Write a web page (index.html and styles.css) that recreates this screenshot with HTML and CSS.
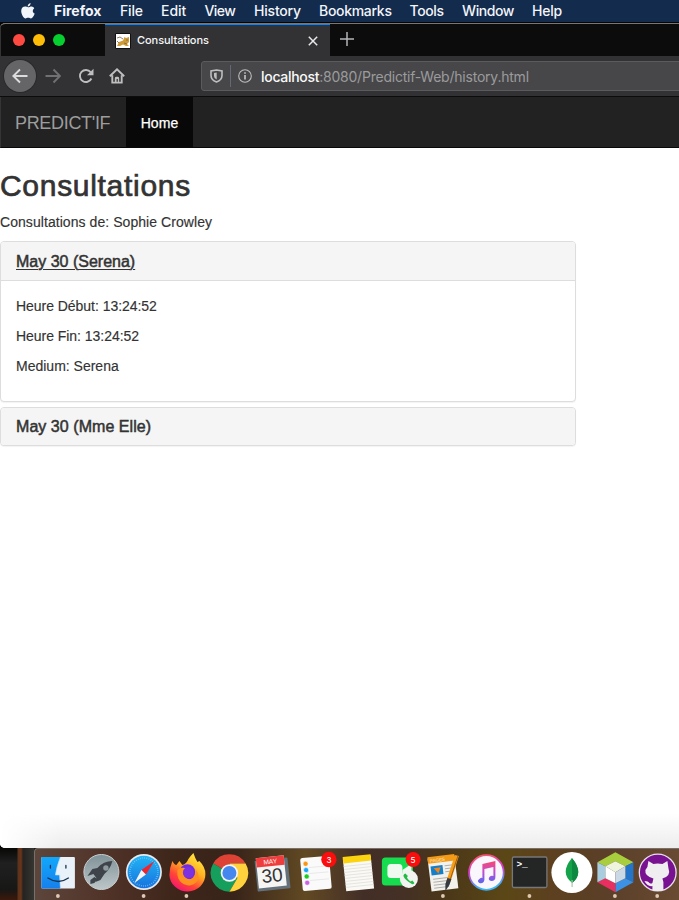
FILE: index.html
```html
<!DOCTYPE html>
<html lang="fr">
<head>
<meta charset="utf-8">
<title>Consultations</title>
<link rel="stylesheet" href="styles.css">
</head>
<body>
<div class="desktop">
  <nav class="menubar">
    <svg class="apple" viewBox="0 0 14 16"><path d="M9.600 0C9.700 1.700 8.300 3.500 6.700 3.500 6.600 1.800 8 .2 9.600 0ZM13.200 5.400C11.200 6.700 11.400 9.500 13.700 10.500 13 12.800 11.400 15.400 9.900 15.400 8.900 15.400 8.500 14.800 7.200 14.800 5.900 14.800 5.400 15.400 4.500 15.400 2.700 15.400.2 11.400.2 8 .2 5 2.100 3.600 4.100 3.600 5.400 3.600 6.200 4.300 7.200 4.300 8.100 4.300 9.100 3.500 10.600 3.500 11.700 3.500 12.700 4.200 13.200 5.400Z"/></svg>
    <span class="app">Firefox</span><span class="m-file">File</span><span class="m-edit">Edit</span><span class="m-view">View</span><span class="m-history">History</span><span class="m-bookmarks">Bookmarks</span><span class="m-tools">Tools</span><span class="m-window">Window</span><span>Help</span>
  </nav>

  <div class="window">
    <div class="tabstrip">
      <div class="lights"><i class="red"></i><i class="yellow"></i><i class="green"></i></div>
      <div class="tab">
        <svg class="favicon" viewBox="0 0 16 16"><path d="M.5.5h15v15H.5Z" fill="#fff" stroke="#111"/><path d="M2 13 4 9 8 7.500 9.500 4 11 5l3-1v5l-2 2 2 2h-3L8 11.500l-3 1.500Z" fill="#d09a36"/><path d="m2 5 3-1 3 2M2 8l2 2M11 7h2M9 10l3 1" stroke="#75664a" fill="none" stroke-width=".8"/></svg>
        <span class="tab-title">Consultations</span>
        <svg class="close" viewBox="0 0 10 10"><path d="m.8.8 8.400 8.400M9.200.8.8 9.200"/></svg>
      </div>
      <svg class="plus" viewBox="0 0 14 14"><path d="M7 0v14M0 7h14"/></svg>
    </div>
    <div class="toolbar">
      <div class="back"><svg viewBox="0 0 16 16"><path d="M15.500 8H1.500M8 1.500 1.300 8 8 14.500"/></svg></div>
      <svg class="forward" viewBox="0 0 16 16"><path d="M.5 8h14M8.500 1.500 15 8l-6.500 6.500"/></svg>
      <svg class="reload" viewBox="0 0 16 16"><path d="M13.400 10.500A6 6 0 1 1 12.600 4.200"/><path d="M15.500.7v6.500H9Z" class="fill"/></svg>
      <svg class="home" viewBox="0 0 16 16"><path d="M.8 8.300 8 1.300l7.200 7M3.300 7.300v7.300h9.400V7.300"/><path d="M5.800 15v-4.500Q5.800 8.800 7 8.800h2q1.200 0 1.200 1.700V15H8.800v-4H7.600v4Z" class="fill"/></svg>
      <div class="urlbar">
        <svg class="shield" viewBox="0 0 13 14"><path d="M6.500 1 12 2v4.500Q12 11 6.500 13 1 11 1 6.500V2Z"/><path d="M6.700 3.500 4 4v3q0 2.500 2.700 3.500Z" class="fill"/></svg>
        <i class="divider"></i>
        <svg class="info" viewBox="0 0 14 14"><circle cx="7" cy="7" r="6.300"/><path d="M7 6v4.500M7 3.200v1.500" stroke-width="1.700"/></svg>
        <span class="url"><b>localhost</b>:8080/Predictif-Web/history.html</span>
      </div>
    </div>

    <header class="navbar"><a class="brand">PREDICT'IF</a><a class="nav-home">Home</a></header>

    <main class="page">
      <h1>Consultations</h1>
      <p class="subtitle">Consultations de: Sophie Crowley</p>
      <section class="panel">
        <h4 class="open"><a>May 30 (Serena)</a></h4>
        <div class="panel-body">
          <p class="time">Heure Début: 13:24:52</p>
          <p class="time">Heure Fin: 13:24:52</p>
          <p>Medium: Serena</p>
        </div>
      </section>
      <section class="panel"><h4><a class="elle">May 30 (Mme Elle)</a></h4></section>
    </main>
  </div>

  <footer class="bottom">
    <div class="wallpaper"></div>
    <div class="dock">
      <svg viewBox="-21.400 -25 42.750 52">
        <defs><linearGradient id="fb" x2="0" y2="1"><stop stop-color="#12a8fb"/><stop offset="1" stop-color="#1680ed"/></linearGradient></defs>
        <rect x="-17" y="-16" width="33.500" height="31.500" rx="1" fill="#e9f1f9"/><path d="M-17-16H2Q-2-6-3 2H1L2 15.500H-17Z" fill="url(#fb)"/><path d="M2-16Q-2-6-3 2H1.300L2 15.500" fill="none" stroke="#bcdcf2" stroke-width=".6"/><path d="M-8-7.500v2.500M7.500-7.500v2.500M-10.500 5Q0 12 10 5" fill="none" stroke="#15334d" stroke-width="1.300" stroke-linecap="round"/><circle class="dot" cx="-.5" cy="23" r="1.900"/></svg>
      <svg viewBox="-21.400 -25 42.750 52">
        <defs><linearGradient id="rg" x2="0" y2="1"><stop stop-color="#7f9297"/><stop offset="1" stop-color="#bdc6c9"/></linearGradient></defs>
        <circle cy="-1" r="17.500" fill="url(#rg)" stroke="#c8cdce"/><path d="M11-12Q2-12-4-5L-9-4-14 3-8 1-5 5-6 9-1 7 3 1Q9-4 11-12Z" fill="#3e4449"/><path d="M-7 4-11 7-11 11-7 10-4 6Z" fill="#3e4449"/><circle cx="4.500" cy="-5" r="2.700" fill="#8c999e"/></svg>
      <svg viewBox="-21.400 -25 42.750 52">
        <defs><linearGradient id="sb" x2="0" y2="1"><stop stop-color="#22b5f5"/><stop offset="1" stop-color="#1772de"/></linearGradient></defs>
        <circle cx="-.5" cy="-1" r="18" fill="#e6eaee"/><circle cx="-.5" cy="-1" r="16.300" fill="url(#sb)"/><circle cx="-.5" cy="-1" r="14" fill="none" stroke="#8bcdf5" stroke-width="1.500" stroke-dasharray=".6 1.600"/><path d="M10-12-3-3 1.500 1.500Z" fill="#f0252c"/><path d="M-10 10-3-3 1.500 1.500Z" fill="#f4f4f5"/><circle class="dot" cx="-.8" cy="23" r="1.900"/></svg>
      <svg viewBox="-21.400 -25 42.750 52">
        <defs><linearGradient id="ff" x1=".8" x2=".2" y2="1"><stop stop-color="#fff044"/><stop offset=".4" stop-color="#ffae20"/><stop offset=".7" stop-color="#ff4537"/><stop offset="1" stop-color="#f20c79"/></linearGradient></defs>
        <path d="M-15-12Q-13-8-11-8L-8-12-5-8Q-1-9 1-14 3-17 6-20 8-14 10-11L12-12Q18-6 18 1A18 17 0 0 1-18 2Q-18-5-15-12Z" fill="url(#ff)"/><circle cy="-1" r="7.800" fill="#712be8"/><path d="M-10-3Q-5-7-1-4L3-3Q0 1-4 0-3 7 4 6 9 4 8-4 13 2 10 8 4 15-4 11-11 7-10-3Z" fill="#ff9120"/><circle cx="1" cy="-.5" r="5.500" fill="#7d32df"/><circle class="dot" cx="-1" cy="23" r="1.900"/></svg>
      <svg viewBox="-21.400 -25 42.750 52">
        <path d="M0 0-16.200-9.400A18.700 18.700 0 0 1 16.200-9.400H0Z" fill="#dd4235"/><path d="M0 0-16.200-9.400A18.700 18.700 0 0 0 0 18.700L8 5Z" fill="#169f5c"/><path d="M0-9.400H16.200A18.700 18.700 0 0 1 0 18.700L8 5Z" fill="#ffd13d"/><circle r="8.700" fill="#f3f3f3"/><circle r="7" fill="#4387ef"/></svg>
      <svg viewBox="-21.400 -25 42.750 52">
        <g transform="rotate(-6)"><rect x="-16.500" y="-14" width="33" height="31" rx="1" fill="#65717a"/><path d="M-15-16.500H13V14H-15Z" fill="#f5f5f4"/><path d="M-15-16.500H13V-7H-15Z" fill="#ef3c3d"/><text x="-1" y="-9.300" class="cal-month">MAY</text><text x="-.5" y="9" class="cal-day">30</text></g></svg>
      <svg viewBox="-21.400 -25 42.750 52">
        <g transform="rotate(-5)"><rect x="-14" y="-16" width="29" height="33" rx="2" fill="#fafafa"/><path d="M-6-6H13M-6 0H13M-6 7H13" stroke="#ddd" stroke-width=".6"/><g stroke="#fff" stroke-width=".5"><circle cx="-9" cy="-10" r="2.500" fill="#fb9414"/><circle cx="-9" cy="-3.700" r="2.500" fill="#17a6f8"/><circle cx="-9" cy="2.700" r="2.500" fill="#1dcc23"/><circle cx="-9" cy="9" r="2.500" fill="#cd61e1"/></g></g><circle cx="13.500" cy="-13.500" r="7.700" fill="#f90d0d"/><text x="13.500" y="-10.500" class="count">3</text></svg>
      <svg viewBox="-21.400 -25 42.750 52">
        <g transform="rotate(-6)"><path d="M-14-16H14V17H-14Z" fill="#faf9f5"/><path d="M-14-17.500H14V-11H-14Z" fill="#fbd30e"/><path d="M-14-8H14M-14-5H14M-14-2H14M-14 1H14M-14 4H14M-14 7H14M-14 10H14M-14 13H14" stroke="#d8d7d1" stroke-width=".6"/></g></svg>
      <svg viewBox="-21.400 -25 42.750 52">
        <rect x="-18.500" y="-15.500" width="31" height="28" rx="3.500" fill="#17dc4f"/><rect x="-13" y="-9" width="15" height="14" rx="3.500" fill="#eef9f0"/><path d="m2-3 9-6v14L2 0Z" fill="#eef9f0"/><circle cx="8.500" cy="6" r="9" fill="#f3f4f1"/><path d="M4 1Q1 3 7 8t7 2l-2-2.500-2 1Q7 6 6.500 4.500L7.500 3 5 .5Z" fill="#22bc43"/><circle cx="12.700" cy="-13.500" r="7.500" fill="#f90d0d"/><text x="12.700" y="-10.500" class="count">5</text></svg>
      <svg viewBox="-21.400 -25 42.750 52">
        <g transform="rotate(-7)"><path d="M-14-16H13V17H-14Z" fill="#f3f1ec"/><path d="M-14-17.500H13V-11H-14Z" fill="#f39a18"/><text x="-12" y="-12" class="pages">PAGES</text><path d="M-12-8H0V1H-12Z" fill="#167fc9"/><path d="m-9-6h7l-3 6Z" fill="#f18418"/><path d="M2-7h8M2-4h7M2-1h6M-11 5H5M-11 8H4M-11 11H4M-11 14H4" stroke="#aaa" stroke-width=".9"/></g><path d="M11.500-18 15.500-17 7 9 3 13V8Z" fill="#f69b12"/><path d="m4 5 4 1-2 6-4 6V11Z" fill="#343a40"/><path d="m14.500-17-7.500 23" stroke="#935522" stroke-width=".9"/><circle class="dot" cx="-.5" cy="23" r="1.900"/></svg>
      <svg viewBox="-21.400 -25 42.750 52">
        <defs><linearGradient id="mu" x2=".2" y2="1"><stop stop-color="#ff5962"/><stop offset=".5" stop-color="#d53ad3"/><stop offset="1" stop-color="#3bb6fa"/></linearGradient><linearGradient id="mn" x2="0" y2="1"><stop stop-color="#f8486e"/><stop offset=".5" stop-color="#c04cd4"/><stop offset="1" stop-color="#5669ed"/></linearGradient></defs>
        <circle cy="-.5" r="17.300" fill="#f9f7fb" stroke="url(#mu)" stroke-width="1.800"/><path d="M-4-9 9-12V4Q9 8 5 8 1 7 3 4 5 2 7 3V-6L-2-4V7Q-3 11-7 10-10 8-7 6-5 4-4 5Z" fill="url(#mn)"/></svg>
      <svg viewBox="-21.400 -25 42.750 52">
        <rect x="-17" y="-16" width="34.500" height="30.500" rx="1.500" fill="#242626" stroke="#777" stroke-width="1.300"/><text x="-13" y="-6.500" class="prompt">&gt;_</text><circle class="dot" cy="23" r="1.900"/></svg>
      <svg viewBox="-21.400 -25 42.750 52">
        <circle cx=".5" cy="-.5" r="20.500" fill="#fff"/><path d="M.5-15Q13 0 .8 10Q-12 0 .5-15Z" fill="#14a24b"/><path d="M.5-15Q13 0 .8 10Z" fill="#0d8841"/><path d="M.7 7v7" stroke="#abc3ac" stroke-width="1.200"/></svg>
      <svg viewBox="-21.400 -25 42.750 52">
        <g transform="translate(1 -.7)"><path d="M0-20 18-10 10-6 0-11-10-6-18-10Z" fill="#a9ce3d"/><path d="m18-10v20L10 6V-6Z" fill="#2475ca"/><path d="m18 10-18 10V11L10 6Z" fill="#3c91e5"/><path d="M0 20-18 10-10 6 0 11Z" fill="#e92e60"/><path d="M-18 10V-10L-10-6V6Z" fill="#a8cddf"/><path d="M0-11 10-6 0 0-10-6Z" fill="#eef5dc"/><path d="M-10-6 0 0V11L-10 6Z" fill="#fff"/><path d="M10-6 0 0V11L10 6Z" fill="#cbd9e7"/></g><circle class="dot" cx=".5" cy="23" r="1.900"/></svg>
      <svg viewBox="-21.400 -25 42.750 52">
        <circle cx=".3" cy="-.5" r="18.400" fill="#781290" stroke="#e7dfeb" stroke-width="1.300"/><path d="M-9-12-4-9Q0-10 5-9L10-12 11-5Q14 3 5 5.500L6 9V17Q0 19-5 17V13Q-10 14-13 8-9 8-8 10-6 11-5 10L-4 5.500Q-13 3-12-3L-10-6Z" fill="#f0edf1"/><circle class="dot" cx="-.2" cy="23" r="1.900"/></svg>
    </div>
  </footer>
</div>
</body>
</html>
```

FILE: styles.css
```css
* { box-sizing: border-box; }
body { margin: 0; overflow: hidden; }
.desktop { width: 679px; height: 900px; display: flex; flex-direction: column; background: #050505; overflow: hidden; }
svg { display: block; flex: none; }

.menubar { height: 22px; flex: none; display: flex; align-items: center; padding-left: 21px; background: #132b4c; color: #f2f5fa; font: 500 14px/22px Inter, sans-serif; letter-spacing: -.2px; white-space: nowrap; }
.menubar span { flex: none; width: 47px; }
.menubar .apple { width: 14px; height: 16px; margin: -1px 19px 0 0; fill: #f2f5fa; }
.menubar .app { font-weight: 700; width: 66px; letter-spacing: 0; }
.menubar .m-file { width: 41px; }
.menubar .m-edit { width: 43.500px; letter-spacing: 0; }
.menubar .m-view { width: 49.500px; letter-spacing: -.6px; }
.menubar .m-history { width: 65px; }
.menubar .m-bookmarks { width: 90.500px; letter-spacing: -.3px; }
.menubar .m-tools { width: 52.500px; letter-spacing: -.4px; }
.menubar .m-window { width: 70px; letter-spacing: -.4px; }

.window { height: 825px; flex: none; margin-top: 1px; border-top: 1px solid #777; border-radius: 5px 0 0 5px; overflow: hidden; background: #fff; display: flex; flex-direction: column; }
.tabstrip { height: 32px; flex: none; display: flex; background: #0c0c0d; border-left: 1px solid #333; }
.lights { width: 104px; display: flex; gap: 8px; padding: 10px 0 0 12px; }
.lights i { width: 12px; height: 12px; border-radius: 50%; }
.red { background: #ff4a42; }
.yellow { background: #ffbd07; }
.green { background: #06cf30; }
.tab { width: 225px; display: flex; align-items: center; background: #323234; border-top: 1px solid #0a84ff; padding: 0 12px 0 10px; }
.favicon { width: 16px; height: 16px; }
.tab-title { flex: 1; margin: -1px 0 0 6px; font: 500 11px/16px Inter, sans-serif; color: #f7f7f8; letter-spacing: -.05px; }
.close { width: 10px; height: 10px; stroke: #e8e8ea; stroke-width: 1.500; fill: none; }
.plus { width: 14px; height: 14px; margin: 8px 0 0 10px; stroke: #b5b5b8; stroke-width: 1.500; }

.toolbar { height: 41px; flex: none; display: flex; align-items: center; padding-left: 4px; background: #323234; border-bottom: 1px solid #0c0c0d; }
.toolbar svg { fill: none; stroke: #bebebf; stroke-width: 1.900; }
.toolbar .fill { fill: #bebebf; stroke: none; }
.back { width: 32px; height: 32px; flex: none; border-radius: 50%; background: #656567; display: grid; place-items: center; box-shadow: 0 0 0 1px #29292b; }
.toolbar .back svg { width: 16px; height: 16px; stroke: #dcdcdd; }
.toolbar .forward { width: 16px; height: 16px; margin-left: 9px; stroke: #717173; }
.reload { width: 16px; height: 16px; margin-left: 17px; }
.home { width: 16px; height: 16px; margin-left: 15px; }
.urlbar { width: 500px; height: 30px; flex: none; margin-left: 76px; display: flex; align-items: center; background: #474749; border: 1px solid #5b5b5e; border-radius: 3px; padding-left: 8px; }
.toolbar .shield { width: 13px; height: 14px; stroke-width: 1.600; }
.divider { width: 1px; height: 22px; margin: 0 7px; background: #626974; }
.toolbar .info { width: 14px; height: 14px; stroke-width: 1.100; }
.url { margin: 1px 0 0 9px; font: 400 14px/20px Inter, sans-serif; letter-spacing: -.22px; color: #9b9b9d; white-space: nowrap; }
.url b { color: #f9f9fa; font-weight: 500; letter-spacing: -.3px; }

.navbar { height: 51px; flex: none; display: flex; align-items: center; background: #222; border-bottom: 1px solid #080808; font-family: "Liberation Sans", sans-serif; border-left: 1px solid #353535; }
.brand { width: 125px; padding: 2px 0 0 14px; font-size: 18px; letter-spacing: -.32px; color: #9d9d9d; white-space: nowrap; }
.nav-home { width: 67px; height: 50px; background: #080808; color: #fff; font-size: 14px; line-height: 52px; text-align: center; letter-spacing: .1px; -webkit-text-stroke: .25px #fff; }

.page { flex: 1; color: #333; font: 14px/20px "Liberation Sans", sans-serif; background: linear-gradient(90deg, #fff, transparent 60px), linear-gradient(#fff, #fff 665px, #ededed); }
h1 { margin: 21px 0 10px; font-size: 30px; line-height: 33px; font-weight: 400; letter-spacing: .7px; -webkit-text-stroke: .7px #333; }
.page p { margin: 0 0 10px; -webkit-text-stroke: .15px #333; }
.page .subtitle { margin-bottom: 9px; letter-spacing: .06px; }
.panel { width: 576px; border: 1px solid #ddd; border-radius: 4px; box-shadow: 0 1px 1px rgba(0,0,0,.05); margin-bottom: 5px; overflow: hidden; background: #fff; }
.panel h4 { margin: 0; padding: 10px 15px; height: 37px; line-height: 18px; font-size: 16px; font-weight: 400; background: #f5f5f5; -webkit-text-stroke: .5px #333; }
.panel h4.open { height: 39px; padding-top: 11px; border-bottom: 1px solid #ddd; }
.open a { text-decoration: underline; text-decoration-thickness: 1px; text-underline-offset: 2px; }
.elle { letter-spacing: .05px; }
.panel-body { height: 120px; padding: 15px; }
.time { letter-spacing: -.04px; }

.bottom { height: 52px; flex: none; display: flex; background: #1c1812; }
.wallpaper { width: 34px; background: linear-gradient(90deg, transparent 17px, #5a321a 18px, #6b3519 21px, #252321 23px, #353531), linear-gradient(#090807, #202020 30%, #171716 80%, #3c180a); }
.dock { width: 645px; border-top: 1px solid #77706b; border-left: 1px solid #77706b; border-radius: 4px 0 0 0; padding-left: 2.300px; display: grid; grid-template-columns: repeat(15, 42.750px); background: linear-gradient(90deg, #5c453b, #513328 11%, #3d251a 22%, #382419 31%, #614923 42%, #432e27 51%, #443025 57%, #4a3718 64%, #5b4716 73%, #5c401f 80%, #5b3f28 89%, #694a32); }
.dock svg { width: 42.750px; height: 52px; margin-top: -1px; }
.dot { fill: #dfc9b2; }
.cal-month { font: 6.500px "Liberation Sans", sans-serif; fill: #fff; text-anchor: middle; }
.cal-day { font: 19px "Liberation Sans", sans-serif; fill: #333; text-anchor: middle; }
.count { font: 500 8px Inter, sans-serif; fill: #fff; text-anchor: middle; }
.pages { font: 4.500px "Liberation Sans", sans-serif; fill: #fff0ce; }
.prompt { font: bold 9.500px "Liberation Mono", monospace; fill: #fff; }
```
